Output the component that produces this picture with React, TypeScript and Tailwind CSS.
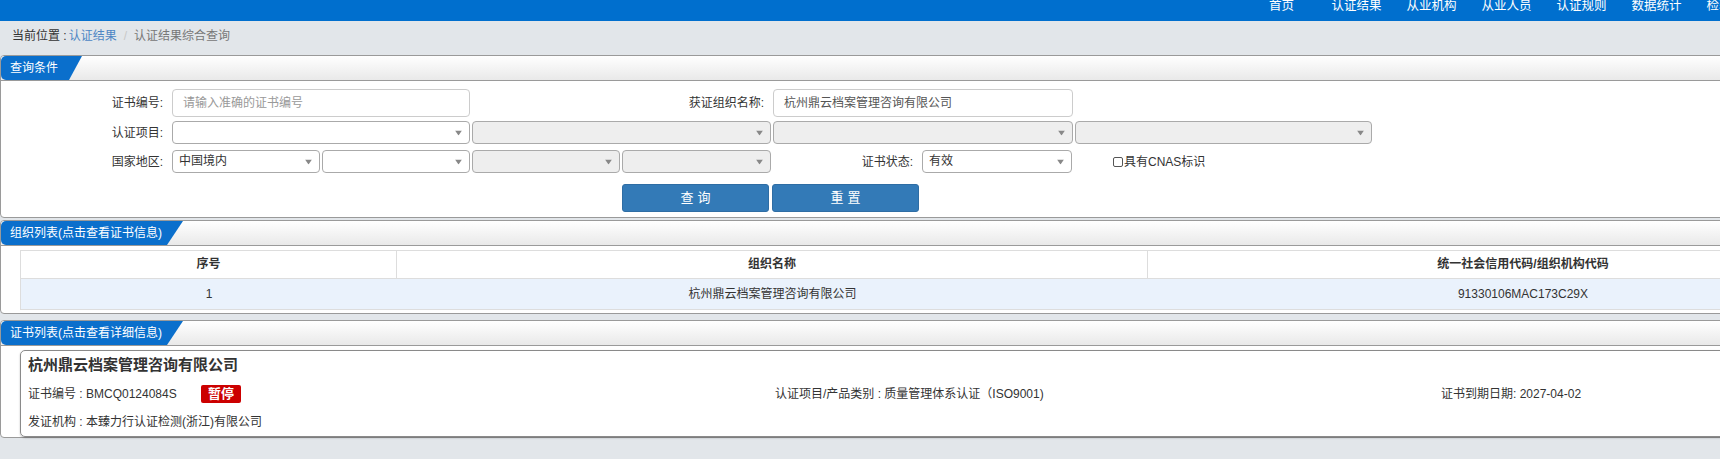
import React from "react";

const FONT = '"Liberation Sans", "Noto Sans CJK SC", sans-serif';

function Panel({
  title,
  tabClass,
  className,
  bodyClass,
  children,
}: {
  title: string;
  tabClass: string;
  className?: string;
  bodyClass?: string;
  children: React.ReactNode;
}) {
  return (
    <div className={"border border-[#9a9a9a] rounded-[4px] bg-white " + (className ?? "")}>
      <div className="h-[25px] border-b border-[#9a9a9a] bg-linear-to-b from-white to-[#e9e9e9] flex rounded-t-[4px]">
        <div className={"h-[24px] bg-[#0a6fcc] rounded-l-[5px] text-white text-[12px] leading-[24px] pl-[9px] whitespace-nowrap " + tabClass}>
          {title}
        </div>
      </div>
      <div className={bodyClass}>{children}</div>
    </div>
  );
}

function Arrow() {
  return (
    <svg width="7" height="5" viewBox="0 0 7 5" className="absolute right-[7px] top-1/2 -translate-y-1/2">
      <path d="M0 0 L7 0 L3.5 5 Z" fill="#888" />
    </svg>
  );
}

function Select({ w, disabled, value }: { w: string; disabled?: boolean; value?: string }) {
  return (
    <div
      className={
        "relative h-[23px] border border-[#aaa] rounded-[4px] text-[12px] leading-[21px] pl-[6px] text-[#333] " +
        (disabled ? "bg-[#eeeeee] " : "bg-white ") +
        w
      }
    >
      {value}
      <Arrow />
    </div>
  );
}

export default function App() {
  const nav = ["首页", "认证结果", "从业机构", "从业人员", "认证规则", "数据统计", "检验检测", "关于我们"];
  return (
    <div className="w-[1720px] h-[459px] overflow-hidden bg-[#e2e6ea]" style={{ fontFamily: FONT }}>
      <div className="w-[1920px]">
        {/* header */}
        <div className="h-[21px] bg-[#006fce] flex pl-[1244px]">
          {nav.map((n) => (
            <div key={n} className="w-[75px] text-center text-white text-[12.5px] leading-[13px] whitespace-nowrap">
              {n}
            </div>
          ))}
        </div>
        {/* breadcrumb */}
        <div className="h-[34px] pt-[7px] pl-[12px] text-[12px] leading-[16px] flex">
          <span className="text-[#333]">当前位置 : </span>
          <span className="text-[#4e86c4] ml-[2px]">认证结果</span>
          <span className="text-[#c8c8c8] mx-[7px]">/</span>
          <span className="text-[#777]">认证结果综合查询</span>
        </div>

        {/* query panel */}
        <Panel
          title="查询条件"
          tabClass="w-[81px] [clip-path:polygon(0_0,100%_0,calc(100%-13px)_100%,0_100%)]"
          bodyClass="pt-[8px] pb-[5px] text-[12px] text-[#333]"
        >
          <div className="flex items-center h-[28px]">
            <div className="w-[162px] text-right">证书编号:</div>
            <div className="ml-[9px] w-[298px] h-[28px] border border-[#ccc] rounded-[4px] pl-[10px] leading-[26px] text-[#999]">
              请输入准确的证书编号
            </div>
            <div className="w-[294px] text-right">获证组织名称:</div>
            <div className="ml-[9px] w-[300px] h-[28px] border border-[#ccc] rounded-[4px] pl-[10px] leading-[26px] text-[#555]">
              杭州鼎云档案管理咨询有限公司
            </div>
          </div>
          <div className="flex items-center h-[23px] mt-[4px]">
            <div className="w-[162px] text-right">认证项目:</div>
            <div className="ml-[9px] flex gap-[2px]">
              <Select w="w-[298px]" />
              <Select w="w-[299px]" disabled />
              <Select w="w-[300px]" disabled />
              <Select w="w-[297px]" disabled />
            </div>
          </div>
          <div className="flex items-center h-[23px] mt-[6px]">
            <div className="w-[162px] text-right">国家地区:</div>
            <div className="ml-[9px] flex gap-[2px]">
              <Select w="w-[148px]" value="中国境内" />
              <Select w="w-[148px]" />
              <Select w="w-[148px]" disabled />
              <Select w="w-[149px]" disabled />
            </div>
            <div className="w-[142px] text-right">证书状态:</div>
            <div className="ml-[9px]">
              <Select w="w-[150px]" value="有效" />
            </div>
            <div className="ml-[41px] flex items-center">
              <span className="inline-block w-[10px] h-[10px] border border-[#555] rounded-[2px] bg-white mr-[1px]" />
              <span>具有CNAS标识</span>
            </div>
          </div>
          <div className="flex mt-[11px] pl-[621px] gap-[3px]">
            <div className="w-[147px] h-[28px] bg-[#337ab7] border border-[#2e6da4] rounded-[3px] text-white text-[13px] leading-[26px] text-center tracking-[4px] pl-[4px]">
              查询
            </div>
            <div className="w-[147px] h-[28px] bg-[#337ab7] border border-[#2e6da4] rounded-[3px] text-white text-[13px] leading-[26px] text-center tracking-[4px] pl-[4px]">
              重置
            </div>
          </div>
        </Panel>

        {/* org list */}
        <Panel
          title="组织列表(点击查看证书信息)"
          className="mt-[2px]"
          tabClass="w-[182px] [clip-path:polygon(0_0,100%_0,calc(100%-16px)_100%,0_100%)]"
          bodyClass="pt-[4px] pb-[3px] pl-[19px] text-[12px] text-[#333]"
        >
          <div className="w-[1879px] border border-[#ddd]">
            <div className="flex h-[28px] leading-[27px] font-bold border-b border-[#ddd] bg-white">
              <div className="w-[376px] text-center border-r border-[#ddd]">序号</div>
              <div className="w-[751px] text-center border-r border-[#ddd]">组织名称</div>
              <div className="flex-1 text-center">统一社会信用代码/组织机构代码</div>
            </div>
            <div className="flex h-[30px] leading-[30px] bg-[#eaf2fc]">
              <div className="w-[376px] text-center">1</div>
              <div className="w-[751px] text-center">杭州鼎云档案管理咨询有限公司</div>
              <div className="flex-1 text-center">91330106MAC173C29X</div>
            </div>
          </div>
        </Panel>

        {/* cert list */}
        <Panel
          title="证书列表(点击查看详细信息)"
          className="mt-[6px]"
          tabClass="w-[182px] [clip-path:polygon(0_0,100%_0,calc(100%-16px)_100%,0_100%)]"
          bodyClass="pt-[4px] pl-[19px] text-[12px] text-[#333]"
        >
          <div className="w-[1880px] border border-[#8a8a8a] rounded-[5px] shadow-[0_1px_2px_rgba(0,0,0,0.25)] pl-[7px] pt-[4px] pb-[4px]">
            <div className="h-[20px] leading-[20px] text-[15px] font-bold text-[#333]">杭州鼎云档案管理咨询有限公司</div>
            <div className="flex items-center h-[20px] mt-[9px]">
              <div className="w-[747px] flex items-center">
                <span className="w-[173px]">证书编号 : BMCQ0124084S</span>
                <span className="w-[40px] h-[18px] bg-[#cc0000] rounded-[2px] text-white text-[13px] font-bold leading-[18px] text-center">
                  暂停
                </span>
              </div>
              <div className="w-[666px]">认证项目/产品类别 : 质量管理体系认证（ISO9001)</div>
              <div>证书到期日期: 2027-04-02</div>
            </div>
            <div className="h-[20px] leading-[20px] mt-[8px]">发证机构 : 本臻力行认证检测(浙江)有限公司</div>
          </div>
        </Panel>
      </div>
    </div>
  );
}
